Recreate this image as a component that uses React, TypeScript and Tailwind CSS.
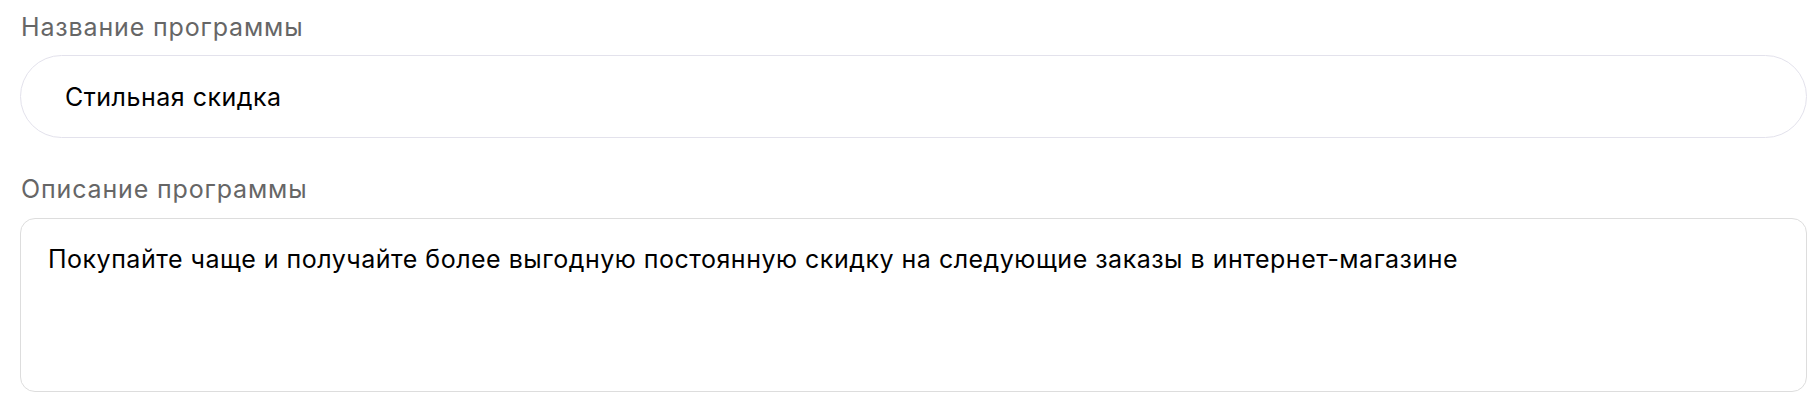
import React, { useState } from 'react';

const ProgramForm: React.FC = () => {
  const [title, setTitle] = useState('Стильная скидка');
  const [description, setDescription] = useState(
    'Покупайте чаще и получайте более выгодную постоянную скидку на следующие заказы в интернет-магазине'
  );

  return (
    <div className="flex flex-col bg-white pl-[20px] pr-[9px] pt-[9px] font-['Inter','Noto_Sans',sans-serif]">
      {/* Name */}
      <label className="pl-px text-[25px] leading-[36px] tracking-[0.85px] text-[#666666]">Название программы</label>
      <input
        type="text"
        value={title}
        onChange={e => setTitle(e.target.value)}
        className="mt-[10px] h-[83px] w-full rounded-full border border-[#e3e2ec] bg-white px-[44px] text-[25px] tracking-[0.5px] text-black outline-none"
        title="Название программы"
      />

      {/* Description */}
      <label className="mt-[33px] pl-px text-[25px] leading-[36px] tracking-[0.85px] text-[#666666]">Описание программы</label>
      <textarea
        value={description}
        onChange={e => setDescription(e.target.value)}
        className="mt-[11px] h-[174px] w-full resize-none rounded-[15px] border border-[#dddddd] bg-white px-[27px] pt-[22px] text-[25px] leading-[36px] tracking-[0.5px] text-black outline-none"
        title="Описание программы"
      />
    </div>
  );
};

export default function App() {
  return <ProgramForm />;
}
